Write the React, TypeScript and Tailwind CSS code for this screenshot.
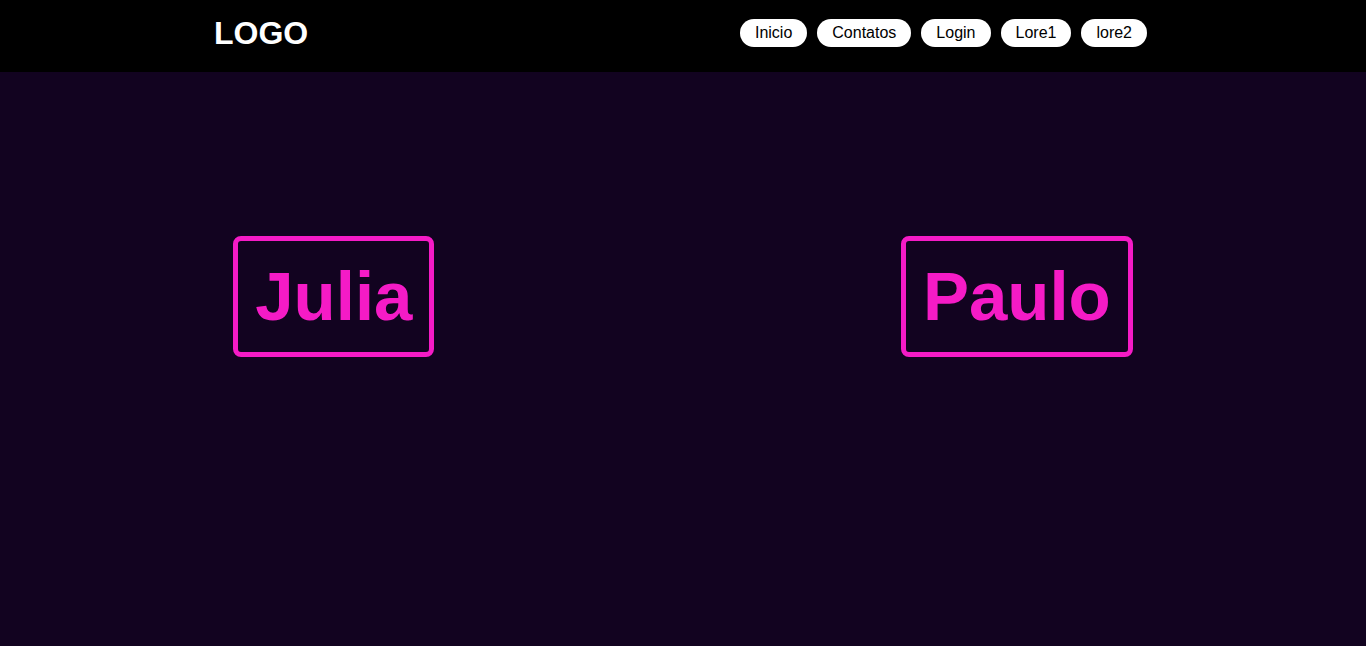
import React from 'react';

const links = ['Inicio', 'Contatos', 'Login', 'Lore1', 'lore2'];
const names = ['Julia', 'Paulo'];

const App: React.FC = () => {
  return (
    <div className="min-h-screen bg-[#120320] font-['Liberation_Sans',Arial,sans-serif]">
      <header className="h-[72px] bg-black flex items-center justify-between pl-[214px] pr-[219px] pb-[6px]">
        <h1 className="text-[32px] font-bold text-white leading-none">LOGO</h1>
        <nav className="flex gap-[10px]">
          {links.map((l) => (
            <a
              key={l}
              href="#"
              className="h-[28px] px-[15px] flex items-center rounded-full bg-white text-black text-[16px]"
            >
              {l}
            </a>
          ))}
        </nav>
      </header>

      <main className="flex justify-around pt-[164px]">
        {names.map((n) => (
          <div
            key={n}
            className="border-[5px] border-[#f51bc6] rounded-[8px] px-[17px] py-[16px]"
          >
            <h2 className="text-[69px] font-bold text-[#f51bc6] leading-[79px]">{n}</h2>
          </div>
        ))}
      </main>
    </div>
  );
};

export default App;
